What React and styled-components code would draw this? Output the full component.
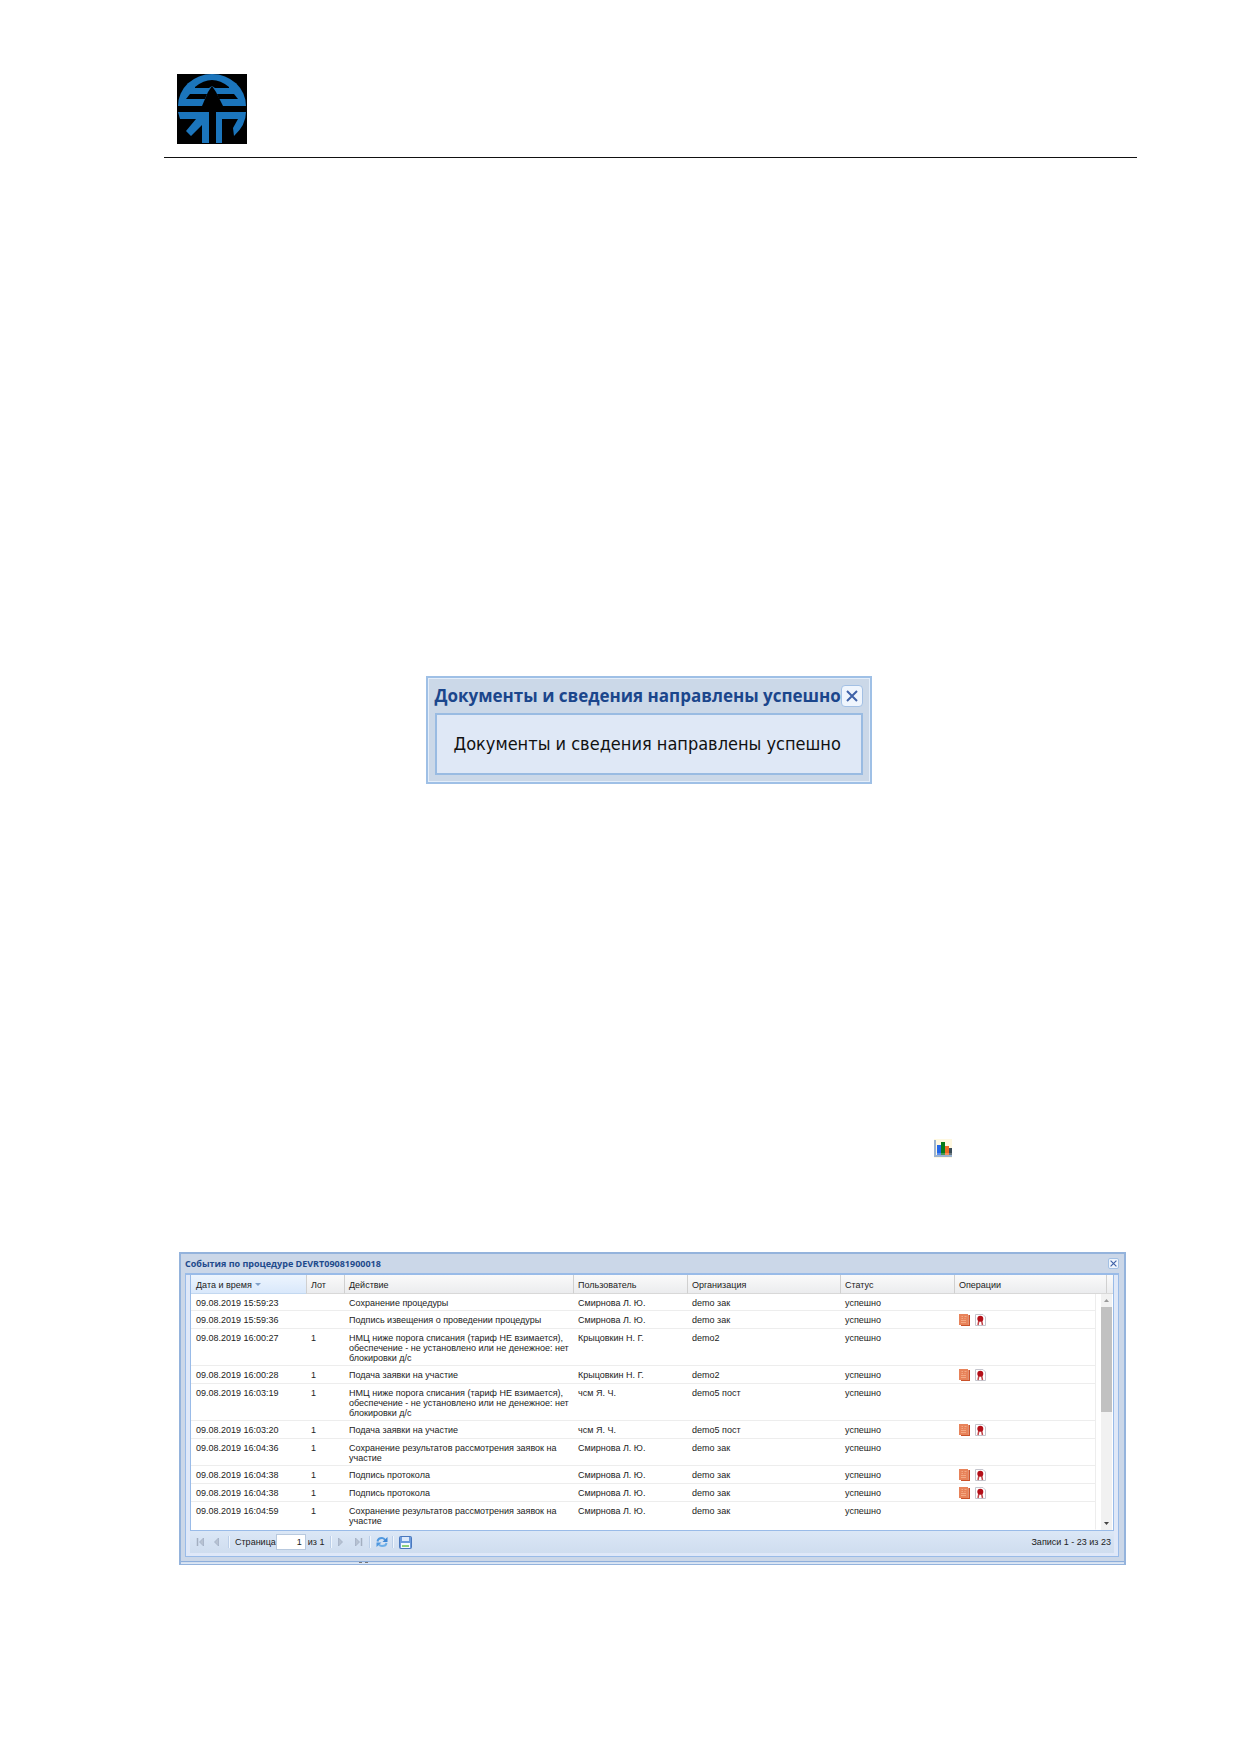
import React from "react";
import styled, { createGlobalStyle } from "styled-components";

const GlobalStyle = createGlobalStyle`
  * { box-sizing: border-box; }
  body { margin: 0; background: #fff; }
  button, input { font: inherit; color: inherit; }
`;

const Page = styled.main`
  display: flex;
  flex-direction: column;
  padding: 74px 102px 188px 164px;
  font-family: "Liberation Sans", Arial, sans-serif;
  font-size: 9px;
  line-height: 10px;
  color: #222;
`;

const PageHeader = styled.header`
  height: 84px;
  padding-left: 13px;
  border-bottom: 1px solid #111;
`;

const DialogRow = styled.section`
  display: flex;
  justify-content: center;
  margin-top: 518px;
  padding-right: 4px;
`;

const Dialog = styled.div`
  width: 446px;
  padding: 0 7px 7px;
  border: 2px solid #9fc0e6;
  background: #cbd8e8;
  box-shadow: inset 0 0 0 1px #e4eefa;
  font-family: "Open Sans", "Noto Sans", sans-serif;
`;

const DialogTitleBar = styled.div`
  display: flex;
  align-items: center;
  justify-content: space-between;
  height: 35px;
`;

const DialogTitle = styled.h1`
  margin: 0;
  font-size: 17px;
  line-height: 22px;
  white-space: nowrap;
  color: #1b468c;
`;

const DialogBody = styled.p`
  margin: 0;
  padding: 18px 17px;
  border: 2px solid #99bbe2;
  background: #dfe8f6;
  font-family: "DejaVu Sans Condensed", "Open Sans", sans-serif;
  font-size: 18px;
  line-height: 22px;
  white-space: nowrap;
  color: #111;
`;

const CloseButton = styled.button`
  flex: none;
  display: flex;
  align-items: center;
  justify-content: center;
  width: ${(p) => p.$size}px;
  height: ${(p) => p.$size}px;
  padding: 0;
  border: 1px solid #a3c0e4;
  border-radius: ${(p) => (p.$size > 15 ? 4 : 2)}px;
  background: #eff5fd;
`;

const ChartRow = styled.div`
  display: flex;
  justify-content: flex-end;
  margin-top: 355px;
  padding-right: 185px;
`;

const Window = styled.section`
  margin: 94px 11px 0 15px;
  padding: 0 5px 0 4px;
  border: 2px solid #94b3dc;
  border-bottom-width: 1px;
  background: #cbd7e8;
`;

const WindowTitleBar = styled.div`
  display: flex;
  align-items: center;
  justify-content: space-between;
  height: 19px;
`;

const WindowTitle = styled.h2`
  margin: 0;
  font-family: "Open Sans", "Noto Sans", sans-serif;
  font-size: 9px;
  line-height: 12px;
  color: #1e4a8c;
`;

const WindowBody = styled.div`
  padding: 0 4px 3px;
  border: 1px solid #99bbe8;
  border-top-width: 2px;
  background: #dfe8f8;
`;

const WindowEdge = styled.div`
  height: 7px;
  margin: 0 -5px 0 -4px;
  padding-left: 178px;
  border-bottom: 1px solid #dbe6f5;
  background: linear-gradient(#cbd7e8 4px, #8daedb 4px, #8daedb 5px, #d3dfef 5px);
  svg { display: block; }
`;

const Grid = styled.div`
  display: flex;
  border: 1px solid #99bbe8;
  border-top: 0;
  background: #fff;
`;

const Table = styled.table`
  flex: 1;
  min-width: 0;
  table-layout: fixed;
  border-collapse: separate;
  border-spacing: 0;
`;

const HeadCell = styled.th`
  height: 19px;
  padding: 1px ${(p) => (p.$first ? 5 : 4)}px 0;
  border-left: ${(p) => (p.$first ? "0" : "1px solid #d0d0d0")};
  border-bottom: 1px solid ${(p) => (p.$sorted ? "#c3d8f0" : "#d8d8d8")};
  background: ${(p) => (p.$sorted ? "linear-gradient(#edf5fe, #d9e8fb)" : "linear-gradient(#fafafa, #ebecee)")};
  font-weight: 400;
  text-align: left;
  white-space: nowrap;
`;

const SortArrow = styled.span`
  display: inline-block;
  margin: 0 0 2px 3px;
  border: 3px solid transparent;
  border-top-color: #7f9fc8;
  border-bottom: 0;
`;

const Cell = styled.td`
  padding: 4px 0 ${(p) => (p.$last ? 3 : 2)}px 5px;
  border-bottom: 1px solid ${(p) => (p.$last ? "transparent" : "#ededed")};
  border-right: ${(p) => (p.$edge ? "1px solid #ededed" : "0")};
  vertical-align: top;
`;

const ActionsCell = styled(Cell)`
  padding-top: 3px;
`;

const Actions = styled.div`
  display: flex;
  gap: 5px;
`;

const IconButton = styled.button`
  display: flex;
  padding: 0;
  border: 0;
  background: none;
`;

const ScrollColumn = styled.div`
  display: flex;
  flex-direction: column;
  width: 17px;
`;

const HeadStub = styled.div`
  height: 19px;
  padding-left: 10px;
  border-bottom: 1px solid #d8d8d8;
  background: linear-gradient(#fafafa, #ebecee);
  &::after {
    content: "";
    display: block;
    height: 100%;
    border-left: 1px solid #d0d0d0;
  }
`;

const Track = styled.div`
  flex: 1;
  display: flex;
  flex-direction: column;
  margin: 0 1px 0 5px;
  background: #f1f1f1;
`;

const ArrowButton = styled.button`
  display: flex;
  align-items: center;
  justify-content: center;
  height: 13px;
  padding: 0;
  border: 0;
  background: none;
`;

const Thumb = styled.div`
  height: 105px;
  margin-bottom: auto;
  background: #c1c1c1;
`;

const Toolbar = styled.div`
  display: flex;
  align-items: center;
  height: 22px;
  padding: 0 3px 0 6px;
  background: linear-gradient(#dbe7f6, #cfddef);
`;

const ToolButton = styled(IconButton)`
  margin-right: ${(p) => p.$gap || 0}px;
`;

const Divider = styled.span`
  width: 2px;
  height: 12px;
  margin-right: 5px;
  border-left: 1px solid #bccfe8;
  border-right: 1px solid #f0f6fd;
`;

const PageLabel = styled.label`
  display: flex;
  align-items: center;
`;

const PageInput = styled.input`
  width: 30px;
  height: 16px;
  padding: 0 3px;
  border: 1px solid #b8c9de;
  background: #fff;
  text-align: right;
`;

const PageTotal = styled.span`
  width: 24px;
  padding-left: 2px;
  white-space: nowrap;
`;

const Summary = styled.span`
  margin-left: auto;
`;

const Logo = () => (
  <svg width="70" height="70" viewBox="0 0 70 70" role="img" aria-label="Логотип">
    <rect width="70" height="70" fill="#000" />
    <g fill="#1b75bc">
      <path d="M1 32A34 32 0 0 1 69 32Z" />
      <path d="M1 38H32V69H25V51L14 62L9 57L19 45H3Z" />
      <path d="M39 38H69Q69 51 57 62L56 54L61 45H45V69H39Z" />
    </g>
    <g fill="#000">
      <path d="M18 13Q35 -1 52 13V14H38L35 12L32 14H18Z" />
      <path d="M13 20H30L28 25H9Z" />
      <path d="M40 20H57L61 25H42Z" />
      <path d="M35 12L39 18L46 32H25L31 18Z" />
    </g>
  </svg>
);

const Cross = ({ size }) => (
  <svg width={size} height={size} viewBox="0 0 12 12" aria-hidden="true">
    <path d="M1 1L11 11M11 1L1 11" stroke="#3f62a8" strokeWidth="2" fill="none" />
  </svg>
);

const ChartIcon = () => (
  <svg width="18" height="19" viewBox="0 0 18 19" role="img" aria-label="События">
    <rect width="18" height="19" fill="#fff8e0" />
    <path d="M1 1V17H18" stroke="#9bb3d0" strokeWidth="2" fill="none" />
    <path d="M3 6H7V16H3Z" fill="#2367e8" />
    <path d="M7 3H11V16H7Z" fill="#087a16" />
    <path d="M11 7H15V16H11Z" fill="#f06a25" />
    <path d="M15 9H18V16H15Z" fill="#394b57" />
    <path d="M3 14H18V16H3Z" fill="#fff" opacity=".25" />
  </svg>
);

const DocIcon = () => (
  <svg width="11" height="12" viewBox="0 0 11 12" aria-hidden="true">
    <path d="M2 1H11V12H2Z" fill="#c9522b" />
    <path d="M0 0H9V11H0Z" fill="#e8835a" />
    <path d="M2.500 2.500H4M5.500 2.500H7.500M2.500 4.500H4M5.500 4.500H6.500M2 6.500H7M2 8.500H7" stroke="#f3a984" fill="none" />
    <path d="M9.500 1V11" stroke="#f6d5c5" strokeWidth=".5" />
  </svg>
);

const SealIcon = () => (
  <svg width="11" height="12" viewBox="0 0 11 12" aria-hidden="true">
    <path d="M.5.5H8L10.500 3V11.500H.5Z" fill="#fff" stroke="#c4c4cc" />
    <path d="M4 6L3 11M6.500 6L7.500 11" stroke="#c0484c" strokeWidth="1.500" fill="none" />
    <circle cx="5.300" cy="4.700" r="3" fill="#b40f18" />
  </svg>
);

const NavIcon = ({ flip, bar }) => (
  <svg width="9" height="10" viewBox="0 0 9 10" aria-hidden="true">
    <g transform={flip ? "translate(9 0) scale(-1 1)" : undefined}>
      {bar && <path d="M1.500 1V9" stroke="#a3afc0" strokeWidth="1.500" />}
      <path d="M7.500 1V9L3.500 5Z" fill="#b7c2d2" stroke="#9dabc0" strokeWidth=".7" />
    </g>
  </svg>
);

const RefreshIcon = () => (
  <svg width="12" height="12" viewBox="0 0 12 12" aria-hidden="true">
    <path d="M1.500 5.500Q2 2 6 2Q8 2 9 4" stroke="#4f98df" strokeWidth="2" fill="none" />
    <path d="M11.500 1V6H6.500Z" fill="#3c86d4" />
    <path d="M10.500 7Q10 10 6 10Q4 10 3 8.500" stroke="#6caee8" strokeWidth="2" fill="none" />
    <path d="M.5 11V6.500H5.500Z" fill="#4f98df" />
  </svg>
);

const SaveIcon = () => (
  <svg width="13" height="13" viewBox="0 0 13 13" aria-hidden="true">
    <rect x=".5" y=".5" width="12" height="12" rx="1" fill="#6c9bdc" stroke="#4a78bd" />
    <path d="M3 1H10V5H3Z" fill="#dce9fa" />
    <path d="M2 7H11V12H2Z" fill="#f3f8ff" />
    <path d="M3 9H10V11H3Z" fill="#8ccf7c" />
  </svg>
);

const ScrollArrow = ({ down }) => (
  <svg width="5" height="3" viewBox="0 0 5 3" aria-hidden="true">
    <path d={down ? "M0 0H5L2.500 3Z" : "M0 3H5L2.500 0Z"} fill={down ? "#444" : "#999"} />
  </svg>
);

const columns = [
  ["Дата и время", 115],
  ["Лот", 38],
  ["Действие", 229],
  ["Пользователь", 114],
  ["Организация", 153],
  ["Статус", 114],
  ["Операции", 142],
];

const tariff = "НМЦ ниже порога списания (тариф НЕ взимается), обеспечение - не установлено или не денежное: нет блокировки д/с";
const review = "Сохранение результатов рассмотрения заявок на участие";
const smirnova = "Смирнова Л. Ю.";

const events = [
  ["15:59:23", "", "Сохранение процедуры", smirnova, "demo зак", false],
  ["15:59:36", "", "Подпись извещения о проведении процедуры", smirnova, "demo зак", true],
  ["16:00:27", "1", tariff, "Крыцовкин Н. Г.", "demo2", false],
  ["16:00:28", "1", "Подача заявки на участие", "Крыцовкин Н. Г.", "demo2", true],
  ["16:03:19", "1", tariff, "чсм Я. Ч.", "demo5 пост", false],
  ["16:03:20", "1", "Подача заявки на участие", "чсм Я. Ч.", "demo5 пост", true],
  ["16:04:36", "1", review, smirnova, "demo зак", false],
  ["16:04:38", "1", "Подпись протокола", smirnova, "demo зак", true],
  ["16:04:38", "1", "Подпись протокола", smirnova, "demo зак", true],
  ["16:04:59", "1", review, smirnova, "demo зак", false],
];

const EventRow = ({ event, last }) => {
  const [time, lot, action, user, org, signed] = event;
  return (
    <tr>
      <Cell $last={last}>09.08.2019 {time}</Cell>
      <Cell $last={last}>{lot}</Cell>
      <Cell $last={last}>{action}</Cell>
      <Cell $last={last}>{user}</Cell>
      <Cell $last={last}>{org}</Cell>
      <Cell $last={last}>успешно</Cell>
      <ActionsCell $edge $last={last}>
        {signed && (
          <Actions>
            <IconButton type="button" aria-label="Открыть документ"><DocIcon /></IconButton>
            <IconButton type="button" aria-label="Электронная подпись"><SealIcon /></IconButton>
          </Actions>
        )}
      </ActionsCell>
    </tr>
  );
};

export default function App() {
  return (
    <>
      <GlobalStyle />
      <Page>
        <PageHeader><Logo /></PageHeader>

        <DialogRow>
          <Dialog role="dialog" aria-labelledby="dialog-title">
            <DialogTitleBar>
              <DialogTitle id="dialog-title">Документы и сведения направлены успешно</DialogTitle>
              <CloseButton type="button" $size={22} aria-label="Закрыть"><Cross size={12} /></CloseButton>
            </DialogTitleBar>
            <DialogBody>Документы и сведения направлены успешно</DialogBody>
          </Dialog>
        </DialogRow>

        <ChartRow><ChartIcon /></ChartRow>

        <Window aria-labelledby="window-title">
          <WindowTitleBar>
            <WindowTitle id="window-title">События по процедуре DEVRT09081900018</WindowTitle>
            <CloseButton type="button" $size={11} aria-label="Закрыть"><Cross size={7} /></CloseButton>
          </WindowTitleBar>
          <WindowBody>
            <Grid>
              <Table>
                <colgroup>
                  {columns.map(([name, share]) => (
                    <col key={name} style={{ width: `${(share / 905) * 100}%` }} />
                  ))}
                </colgroup>
                <thead>
                  <tr>
                    {columns.map(([name], i) => (
                      <HeadCell key={name} $first={i === 0} $sorted={i === 0} scope="col">
                        {name}
                        {i === 0 && <SortArrow />}
                      </HeadCell>
                    ))}
                  </tr>
                </thead>
                <tbody>
                  {events.map((event, i) => (
                    <EventRow key={i} event={event} last={i === events.length - 1} />
                  ))}
                </tbody>
              </Table>
              <ScrollColumn>
                <HeadStub />
                <Track>
                  <ArrowButton type="button" aria-label="Прокрутить вверх"><ScrollArrow /></ArrowButton>
                  <Thumb />
                  <ArrowButton type="button" aria-label="Прокрутить вниз"><ScrollArrow down /></ArrowButton>
                </Track>
              </ScrollColumn>
            </Grid>
            <Toolbar>
              <ToolButton type="button" $gap={6} aria-label="Первая страница"><NavIcon bar /></ToolButton>
              <ToolButton type="button" $gap={8} aria-label="Предыдущая страница"><NavIcon /></ToolButton>
              <Divider />
              <PageLabel>
                Страница
                <PageInput type="text" defaultValue="1" />
              </PageLabel>
              <PageTotal>из 1</PageTotal>
              <Divider />
              <ToolButton type="button" $gap={8} aria-label="Следующая страница"><NavIcon flip /></ToolButton>
              <ToolButton type="button" $gap={6} aria-label="Последняя страница"><NavIcon flip bar /></ToolButton>
              <Divider />
              <ToolButton type="button" $gap={4} aria-label="Обновить"><RefreshIcon /></ToolButton>
              <Divider />
              <ToolButton type="button" aria-label="Сохранить"><SaveIcon /></ToolButton>
              <Summary>Записи 1 - 23 из 23</Summary>
            </Toolbar>
          </WindowBody>
          <WindowEdge>
            <svg width="10" height="6" viewBox="0 0 10 6" aria-hidden="true">
              <path d="M0 5.500H3M6 5.500H9" stroke="#777" />
            </svg>
          </WindowEdge>
        </Window>
      </Page>
    </>
  );
}
